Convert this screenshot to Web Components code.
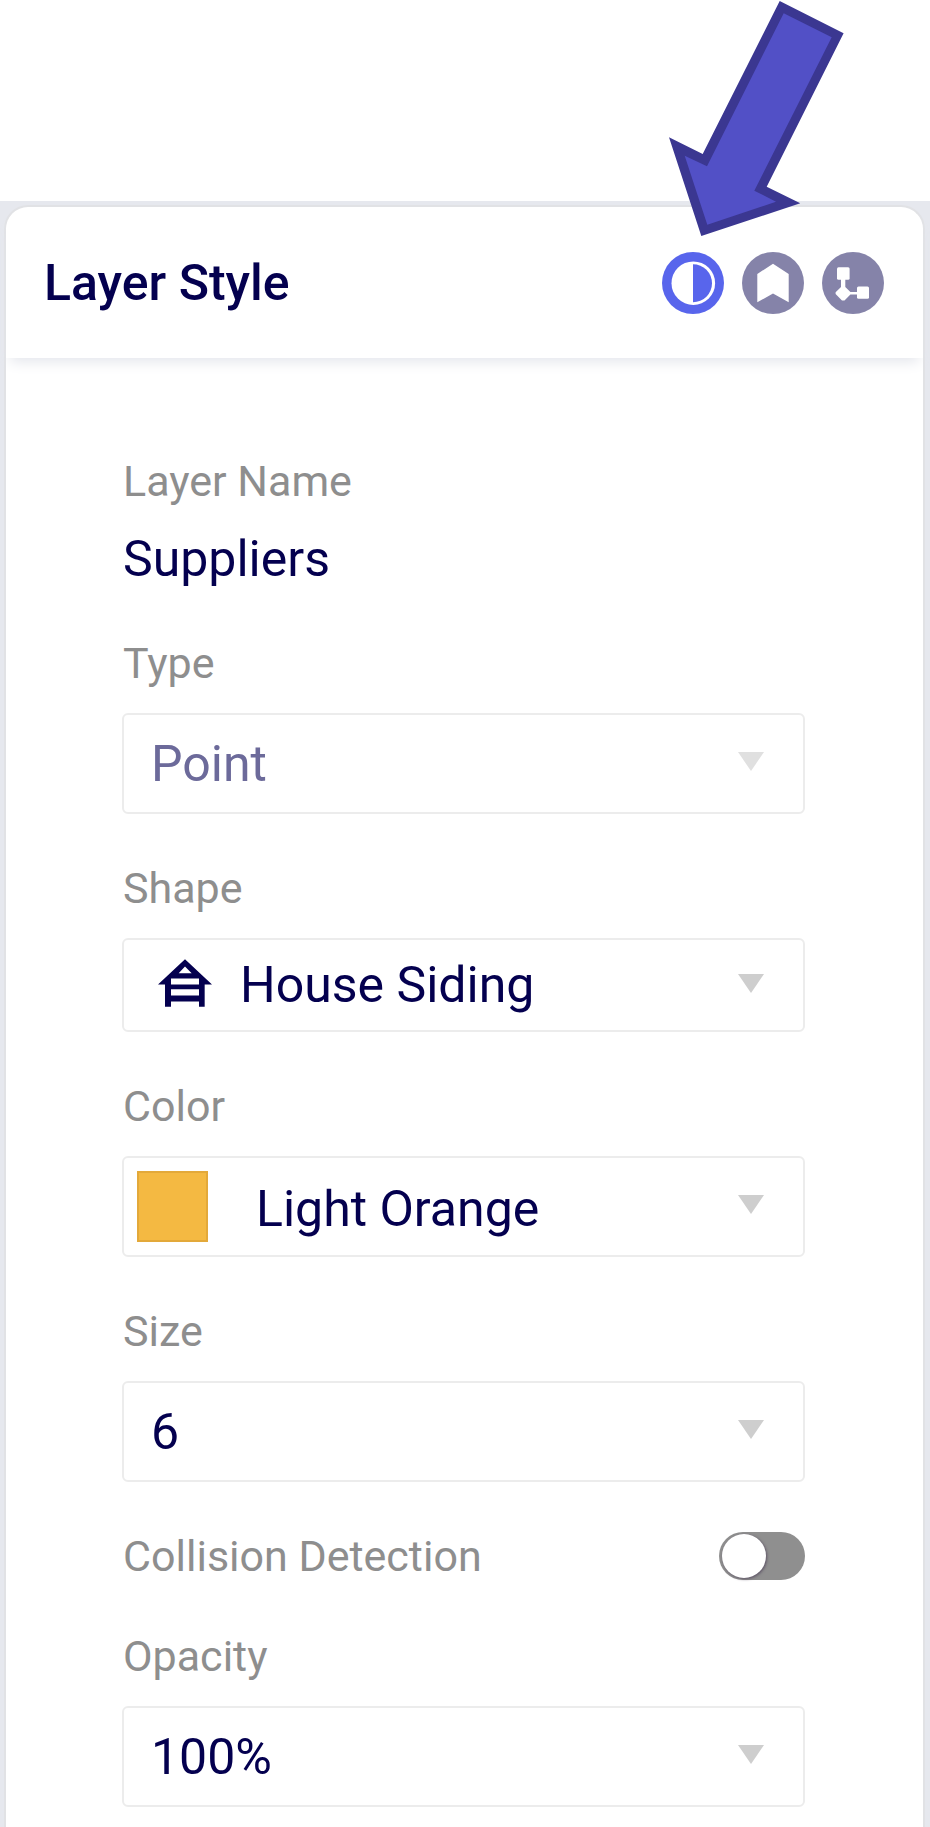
<!DOCTYPE html>
<html lang="en">
<head>
<meta charset="utf-8">
<meta name="viewport" content="width=device-width, initial-scale=1">
<title>Layer Style</title>
<style>
  body { margin: 0; background: #fff; font-family: Roboto, "Liberation Sans", sans-serif; color: #04004f; }
</style>
</head>
<body>
<layer-style-page></layer-style-page>

<script>
const define = (name, html, setup) => {
  const template = document.createElement('template');
  template.innerHTML = html;
  customElements.define(name, class extends HTMLElement {
    connectedCallback() {
      if (this.shadowRoot) return;
      this.attachShadow({ mode: 'open' }).append(template.content.cloneNode(true));
      if (setup) setup(this, this.shadowRoot);
    }
  });
};

/* Round header button; the icon is slotted. */
define('icon-button', `
  <style>
    :host { display: block; }
    button { display: block; width: 62px; height: 62px; padding: 0; border: 0; border-radius: 50%; background: #8583a9; cursor: pointer; }
    :host([active]) button { background: #5865ec; }
    ::slotted(svg) { display: block; width: 62px; height: 62px; }
  </style>
  <button type="button"><slot></slot></button>`,
  (host, root) => {
    const button = root.querySelector('button');
    button.setAttribute('aria-label', host.getAttribute('label'));
    button.setAttribute('aria-pressed', host.hasAttribute('active'));
  });

/* Panel header with title and slotted actions. */
define('panel-header', `
  <style>
    :host { display: block; }
    header { display: flex; align-items: center; justify-content: space-between; height: 151px; padding: 0 39px 0 38px; box-sizing: border-box; border-radius: 22px 22px 0 0; box-shadow: 0 8px 14px -4px #e4e6ec; }
    h1 { margin: 0; font-size: 50px; line-height: 60px; font-weight: 500; }
    .actions { display: flex; gap: 18px; }
  </style>
  <header>
    <h1><slot name="title"></slot></h1>
    <div class="actions"><slot></slot></div>
  </header>`);

/* Read-only label and value. */
define('value-field', `
  <style>
    :host { display: block; padding-left: 1px; }
    dl, dd { margin: 0; }
    dt { font-size: 43px; line-height: 52px; color: #8e8e8e; }
    dd { margin-top: 22px; font-size: 50px; line-height: 60px; }
  </style>
  <dl><dt><slot name="label"></slot></dt><dd><slot></slot></dd></dl>`);

/* Labelled drop-down with an optional slotted marker in front of the value. */
define('select-field', `
  <style>
    :host { display: block; --box-height: 101px; --text-start: 27px; --text-drop: 0px; }
    :host([marker="icon"]) { --box-height: 94px; --text-start: 116px; }
    :host([marker="swatch"]) { --text-start: 132px; --text-drop: 4px; }
    label { display: block; margin-bottom: 24px; padding-left: 1px; font-size: 43px; line-height: 52px; color: #8e8e8e; }
    .box { display: grid; align-items: center; height: var(--box-height); }
    .box > * { grid-area: 1 / 1; }
    select { appearance: none; width: 100%; height: 100%; margin: 0; box-sizing: border-box; padding: var(--text-drop) 80px 0 var(--text-start); border: 2px solid #ececec; border-radius: 6px; background: #fff; color: #04004f; font: 400 50px/60px Roboto, "Liberation Sans", sans-serif; opacity: 1; }
    select:disabled { color: #6c6a9a; }
    .caret { justify-self: end; width: 26px; height: 19px; margin: 0 41px 4px 0; fill: #cecece; pointer-events: none; }
    :host([disabled]) .caret { fill: #e0e0e0; }
    .marker { justify-self: start; display: flex; pointer-events: none; }
    :host([marker="icon"]) .marker { margin-left: 36px; margin-bottom: 4px; }
    :host([marker="swatch"]) .marker { margin-left: 15px; }
  </style>
  <label for="control"></label>
  <div class="box">
    <select id="control"><option></option></select>
    <span class="marker"><slot></slot></span>
    <svg class="caret" viewBox="0 0 26 19" aria-hidden="true"><path d="M0 0H26L13 19Z"/></svg>
  </div>`,
  (host, root) => {
    root.querySelector('label').textContent = host.getAttribute('label');
    root.querySelector('option').textContent = host.getAttribute('value');
    root.querySelector('select').disabled = host.hasAttribute('disabled');
  });

/* Labelled on/off switch. */
define('switch-field', `
  <style>
    :host { display: block; }
    .row { display: flex; align-items: center; justify-content: space-between; }
    label { padding-left: 1px; font-size: 43px; line-height: 52px; color: #8e8e8e; }
    input { appearance: none; display: flex; align-items: center; width: 86px; height: 48px; margin: 0; padding: 0 3px; box-sizing: border-box; border-radius: 24px; background: #8f8f8f; cursor: pointer; }
    input::before { content: ""; width: 44px; height: 44px; border-radius: 50%; background: #fff; box-shadow: 1px 1px 3px #5c5264; }
    input:checked { justify-content: flex-end; background: #5865ec; }
  </style>
  <div class="row">
    <label for="control"></label>
    <input id="control" type="checkbox" role="switch">
  </div>`,
  (host, root) => { root.querySelector('label').textContent = host.getAttribute('label'); });

/* Arrow that calls attention to the first header button. */
define('callout-arrow', `
  <style>
    :host { display: block; position: absolute; top: 0; right: 86px; pointer-events: none; }
    svg { display: block; width: 175px; height: 237px; }
  </style>
  <svg viewBox="669 0 175 237" aria-hidden="true">
    <path fill="#3b3791" d="M779.7 1L843.6 33.3L766.7 186.7L800.3 203.3L701.3 236L669 137.3L702.7 154Z"/>
    <path fill="#5250c6" d="M783.7 13.3L831.7 37.3L754.3 190.7L776 201.7L707.3 224.7L684.7 155.7L707 166.3Z"/>
  </svg>`);

define('layer-style-page', `
  <style>
    :host { display: flex; flex-direction: column; min-height: 100vh; position: relative; padding-top: 201px; box-sizing: border-box; }
    main { flex: 1; display: flex; padding: 4px 5px 0 4px; background: #e6e8ee; }
    .card { flex: 1; min-width: 0; border: 2px solid #e1e2e5; border-bottom: 0; border-radius: 24px 24px 0 0; background: #fff; }
    form { display: flex; flex-direction: column; gap: 48px; padding: 97px 118px 21px 116px; }
    .swatch { display: block; width: 71px; height: 71px; box-sizing: border-box; border: 2px solid #e3a93a; background: #f4b942; }
    .house { display: block; width: 54px; height: 48px; fill: #04004f; }
  </style>
  <main>
    <section class="card">
      <panel-header>
        <span slot="title">Layer Style</span>
        <icon-button label="Style" active>
          <svg viewBox="0 0 62 62" aria-hidden="true"><circle cx="31.3" cy="31.2" r="21.8" fill="#fff"/><path d="M31 12.3A19 19 0 0 1 31 50.3Z" fill="#5865ec"/></svg>
        </icon-button>
        <icon-button label="Labels">
          <svg viewBox="0 0 62 62" aria-hidden="true"><path d="M31 11.7L46.7 22V50.3L31 41.5L15.3 50.3V22Z" fill="#fff"/></svg>
        </icon-button>
        <icon-button label="Relations">
          <svg viewBox="0 0 62 62" aria-hidden="true"><g fill="#fff"><rect x="15" y="15.3" width="12.6" height="12.4" rx="1.5"/><path d="M19 27H23.3V35L28.4 40H36V42.6H28.4L22.5 48.4H20L13.6 42V40.2L19 35Z"/><rect x="35" y="34.6" width="12" height="12.2" rx="1.5"/></g></svg>
        </icon-button>
      </panel-header>
      <form>
        <value-field><span slot="label">Layer Name</span>Suppliers</value-field>
        <select-field label="Type" value="Point" disabled></select-field>
        <select-field label="Shape" value="House Siding" marker="icon">
          <svg class="house" viewBox="0 0 162 143" aria-hidden="true"><path fill-rule="evenodd" d="M81 0L162 76H140V143H123V127H39V143H21V76H0ZM81 22L62 42H101ZM39 58V76H123V58ZM39 90V109H123V90Z"/></svg>
        </select-field>
        <select-field label="Color" value="Light Orange" marker="swatch"><span class="swatch"></span></select-field>
        <select-field label="Size" value="6"></select-field>
        <switch-field label="Collision Detection"></switch-field>
        <select-field label="Opacity" value="100%"></select-field>
      </form>
    </section>
  </main>
  <callout-arrow></callout-arrow>`);
</script>
</body>
</html>
